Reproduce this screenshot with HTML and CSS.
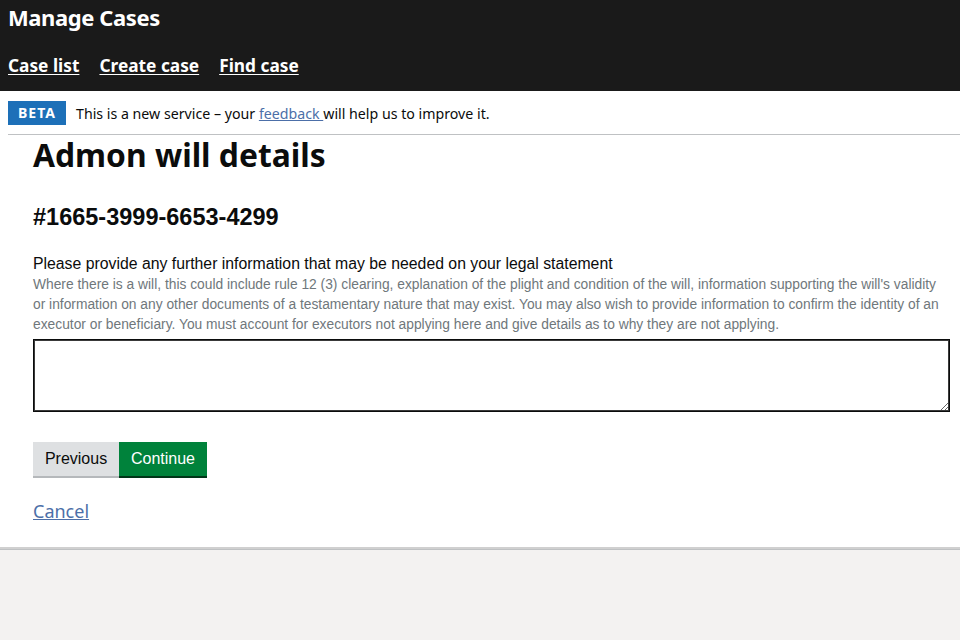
FILE: index.html
```html
<!DOCTYPE html>
<html lang="en">
<head>
<meta charset="utf-8">
<title>Manage Cases</title>
<link rel="stylesheet" href="styles.css">
</head>
<body>
<header class="site-header">
  <div class="brand">Manage Cases</div>
  <nav class="nav">
    <a href="#">Case list</a>
    <a href="#">Create case</a>
    <a href="#">Find case</a>
  </nav>
</header>
<div class="phase">
  <span class="tag">BETA</span>
  <span class="phase-text">This is a new service – your <a href="#">feedback </a>will help us to improve it.</span>
</div>
<main class="main">
  <h1 class="title">Admon will details</h1>
  <h2 class="case-ref">#1665-3999-6653-4299</h2>
  <div class="field">
    <label class="label" for="info">Please provide any further information that may be needed on your legal statement</label>
    <div class="hint">Where there is a will, this could include rule 12 (3) clearing, explanation of the plight and condition of the will, information supporting the will's validity or information on any other documents of a testamentary nature that may exist. You may also wish to provide information to confirm the identity of an executor or beneficiary. You must account for executors not applying here and give details as to why they are not applying.</div>
    <textarea id="info" class="textarea"></textarea>
  </div>
  <div class="buttons">
    <button class="btn btn-secondary" type="button">Previous</button>
    <button class="btn btn-primary" type="button">Continue</button>
  </div>
  <a class="cancel" href="#">Cancel</a>
</main>
<footer class="footer"></footer>
</body>
</html>
```
FILE: styles.css
```css
html, body {
  margin: 0;
  padding: 0;
  height: 100%;
}
body {
  background: #f3f2f1;
  font-family: "Liberation Sans", Arial, sans-serif;
  color: #0b0c0c;
  display: flex;
  flex-direction: column;
}
.site-header {
  background: #1a1a1a;
  color: #fff;
  height: 91px;
  box-sizing: border-box;
  padding: 3px 8px 0;
}
.brand {
  font-family: "Noto Sans", "DejaVu Sans", sans-serif;
  font-weight: 700;
  font-size: 22px;
  line-height: 28px;
  letter-spacing: -0.4px;
}
.nav {
  display: flex;
  gap: 20px;
  margin-top: 21px;
}
.nav a {
  color: #fff;
  font-family: "Noto Sans", "DejaVu Sans", sans-serif;
  font-weight: 700;
  font-size: 17.3px;
  line-height: 28px;
  text-decoration: underline;
  text-underline-offset: 2px;
}
.phase {
  background: #fff;
  padding: 10px 0 9px 8px;
  display: flex;
  align-items: center;
  gap: 10px;
  border-bottom: 1px solid #bfc1c3;
  position: relative;
}
.phase::before {
  content: "";
  position: absolute;
  left: 0;
  bottom: -1px;
  width: 8px;
  height: 1px;
  background: #fff;
}
.tag {
  background: #1d70b8;
  color: #fff;
  font-family: "Noto Sans", "DejaVu Sans", sans-serif;
  font-weight: 700;
  font-size: 14px;
  letter-spacing: 1px;
  line-height: 24px;
  padding: 0 8px;
  width: 42px;
  text-align: center;
}
.phase-text {
  font-family: "Noto Sans", "DejaVu Sans", sans-serif;
  font-size: 14.2px;
  color: #0b0c0c;
}
.phase-text a {
  color: #4c6fa8;
  text-decoration: underline;
}
.main {
  background: #fff;
  padding: 0 10px 25px 33px;
  border-bottom: 2px solid #d0d0d0;
}
.title {
  font-family: "Noto Sans", "DejaVu Sans", sans-serif;
  font-weight: 700;
  font-size: 31.8px;
  line-height: 40px;
  margin: 0;
}
.case-ref {
  font-family: "Liberation Sans", Arial, sans-serif;
  font-weight: 700;
  font-size: 23.5px;
  line-height: 28px;
  margin: 28px 0 0;
}
.field {
  margin-top: 23px;
}
.label {
  display: block;
  font-size: 15.8px;
  line-height: 20px;
  color: #0b0c0c;
}
.hint {
  font-size: 13.8px;
  line-height: 20px;
  color: #6f777b;
  margin-top: 1px;
}
.textarea {
  display: block;
  box-sizing: border-box;
  width: 917px;
  height: 73px;
  margin-top: 4px;
  border: 1px solid #0b0c0c;
  outline: 1px solid #3a3a3a;
  outline-offset: -2px;
  font-family: inherit;
  resize: vertical;
}
.buttons {
  display: flex;
  margin-top: 30px;
}
.btn {
  font-family: "Liberation Sans", Arial, sans-serif;
  font-size: 16px;
  line-height: 20px;
  border: 0;
  padding: 6px 0;
  height: 34px;
  cursor: pointer;
  text-align: center;
}
.btn-secondary {
  background: #dee0e2;
  color: #0b0c0c;
  box-shadow: 0 2px 0 #b5b8bb;
  width: 86px;
}
.btn-primary {
  background: #00823b;
  color: #fff;
  box-shadow: 0 2px 0 #003618;
  width: 88px;
}
.cancel {
  display: inline-block;
  margin-top: 24px;
  font-family: "Noto Sans", "DejaVu Sans", sans-serif;
  font-size: 18px;
  line-height: 22px;
  color: #4c6fa8;
  text-decoration: underline;
}
.footer {
  flex: 1;
  background: #f3f2f1;
  border-top: 1px solid #bfc1c3;
}
```
